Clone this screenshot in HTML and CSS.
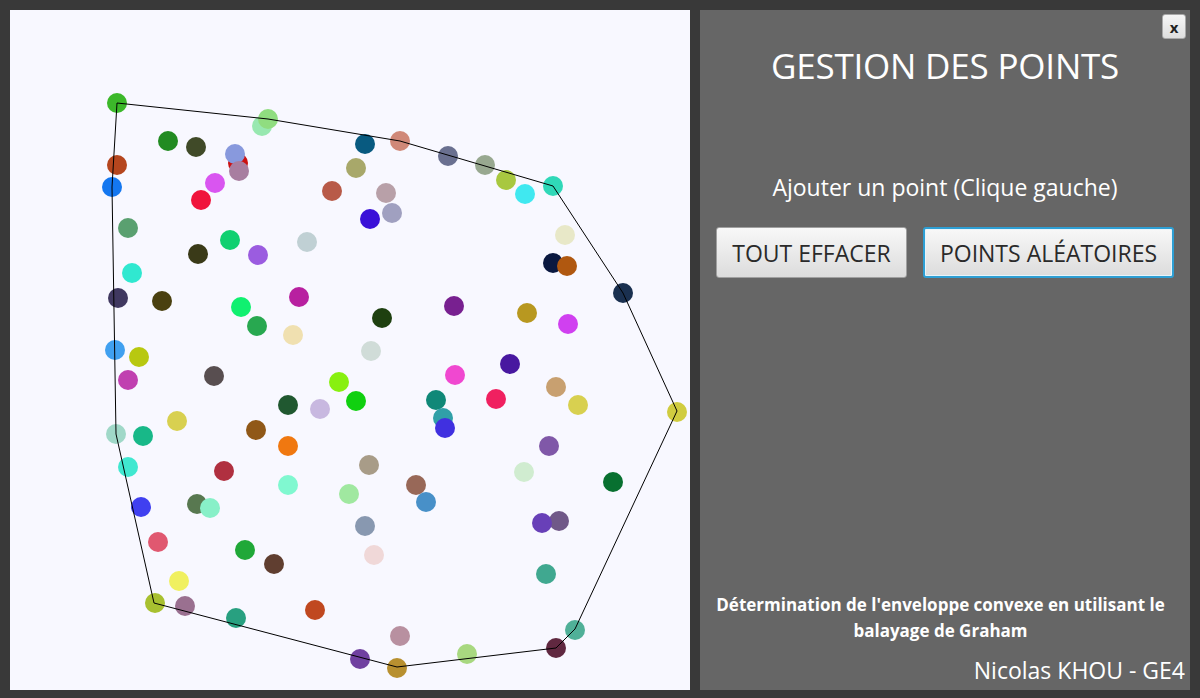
FILE: index.html
```html
<!DOCTYPE html>
<html lang="fr">
<head>
<meta charset="utf-8">
<title>Gestion des points</title>
<link rel="stylesheet" href="styles.css">
</head>
<body>
<div class="app">
  <div class="canvas">
    <svg class="board" width="680" height="680" viewBox="10 10 680 680">
      <g class="pts">
        <circle cx="117" cy="103" r="10" fill="#3cb82a"/>
        <circle cx="262" cy="126" r="10" fill="#98e8b0"/>
        <circle cx="268" cy="119" r="10" fill="#90dd80"/>
        <circle cx="168" cy="141" r="10" fill="#228b22"/>
        <circle cx="196" cy="147" r="10" fill="#404a28"/>
        <circle cx="238" cy="163" r="10" fill="#cc1111"/>
        <circle cx="235" cy="154" r="10" fill="#8899dd"/>
        <circle cx="239" cy="171" r="10" fill="#a87ea0"/>
        <circle cx="365" cy="144" r="10" fill="#085a80"/>
        <circle cx="400" cy="141" r="10" fill="#d08878"/>
        <circle cx="448" cy="156" r="10" fill="#6a7090"/>
        <circle cx="485" cy="165" r="10" fill="#98a890"/>
        <circle cx="506" cy="180" r="10" fill="#a8c840"/>
        <circle cx="553" cy="186" r="10" fill="#30d8b8"/>
        <circle cx="525" cy="194" r="10" fill="#40e8f0"/>
        <circle cx="117" cy="165" r="10" fill="#b5461e"/>
        <circle cx="112" cy="187" r="10" fill="#1477f0"/>
        <circle cx="215" cy="183" r="10" fill="#d955f0"/>
        <circle cx="201" cy="200" r="10" fill="#f0143c"/>
        <circle cx="332" cy="191" r="10" fill="#b85a48"/>
        <circle cx="356" cy="168" r="10" fill="#a8a86a"/>
        <circle cx="386" cy="193" r="10" fill="#b8a0a8"/>
        <circle cx="392" cy="213" r="10" fill="#a0a0c0"/>
        <circle cx="370" cy="219" r="10" fill="#3a10d8"/>
        <circle cx="128" cy="228" r="10" fill="#5aa070"/>
        <circle cx="230" cy="240" r="10" fill="#10d070"/>
        <circle cx="307" cy="242" r="10" fill="#c0d0d4"/>
        <circle cx="198" cy="254" r="10" fill="#3a3a18"/>
        <circle cx="258" cy="255" r="10" fill="#9b5ce0"/>
        <circle cx="565" cy="235" r="10" fill="#e8e8c8"/>
        <circle cx="553" cy="263" r="10" fill="#0a1840"/>
        <circle cx="567" cy="266" r="10" fill="#b05810"/>
        <circle cx="132" cy="273" r="10" fill="#30e8d0"/>
        <circle cx="118" cy="298" r="10" fill="#403860"/>
        <circle cx="162" cy="301" r="10" fill="#4a4010"/>
        <circle cx="241" cy="307" r="10" fill="#10f070"/>
        <circle cx="299" cy="297" r="10" fill="#b820a0"/>
        <circle cx="257" cy="326" r="10" fill="#28a850"/>
        <circle cx="293" cy="335" r="10" fill="#f0e0b0"/>
        <circle cx="382" cy="318" r="10" fill="#1e4010"/>
        <circle cx="454" cy="306" r="10" fill="#782090"/>
        <circle cx="527" cy="313" r="10" fill="#b89820"/>
        <circle cx="568" cy="324" r="10" fill="#d040f0"/>
        <circle cx="623" cy="293" r="10" fill="#1a3050"/>
        <circle cx="371" cy="351" r="10" fill="#d0dcd8"/>
        <circle cx="115" cy="350" r="10" fill="#40a0f0"/>
        <circle cx="139" cy="357" r="10" fill="#b8c810"/>
        <circle cx="128" cy="380" r="10" fill="#c040b0"/>
        <circle cx="214" cy="376" r="10" fill="#584e50"/>
        <circle cx="339" cy="382" r="10" fill="#88f010"/>
        <circle cx="356" cy="401" r="10" fill="#10d010"/>
        <circle cx="288" cy="405" r="10" fill="#205830"/>
        <circle cx="320" cy="409" r="10" fill="#c8b8e0"/>
        <circle cx="455" cy="375" r="10" fill="#f048d0"/>
        <circle cx="510" cy="364" r="10" fill="#4818a0"/>
        <circle cx="436" cy="400" r="10" fill="#108878"/>
        <circle cx="496" cy="399" r="10" fill="#f02060"/>
        <circle cx="556" cy="387" r="10" fill="#c8a070"/>
        <circle cx="578" cy="405" r="10" fill="#d8d050"/>
        <circle cx="677" cy="412" r="10" fill="#d0cc40"/>
        <circle cx="443" cy="418" r="10" fill="#30a0a8"/>
        <circle cx="445" cy="428" r="10" fill="#4030e0"/>
        <circle cx="177" cy="421" r="10" fill="#d8d050"/>
        <circle cx="116" cy="434" r="10" fill="#a0d8c8"/>
        <circle cx="143" cy="436" r="10" fill="#18b888"/>
        <circle cx="256" cy="430" r="10" fill="#905818"/>
        <circle cx="288" cy="446" r="10" fill="#f07810"/>
        <circle cx="549" cy="446" r="10" fill="#8058a8"/>
        <circle cx="128" cy="467" r="10" fill="#40e8d0"/>
        <circle cx="224" cy="471" r="10" fill="#b03040"/>
        <circle cx="369" cy="465" r="10" fill="#a89c88"/>
        <circle cx="524" cy="472" r="10" fill="#d0ecd0"/>
        <circle cx="613" cy="482" r="10" fill="#087030"/>
        <circle cx="288" cy="485" r="10" fill="#80f8d0"/>
        <circle cx="349" cy="494" r="10" fill="#a0e8a0"/>
        <circle cx="416" cy="485" r="10" fill="#986858"/>
        <circle cx="426" cy="502" r="10" fill="#4890c8"/>
        <circle cx="141" cy="507" r="10" fill="#4040f0"/>
        <circle cx="197" cy="504" r="10" fill="#587850"/>
        <circle cx="210" cy="508" r="10" fill="#88f0c8"/>
        <circle cx="365" cy="526" r="10" fill="#8898b0"/>
        <circle cx="559" cy="521" r="10" fill="#705888"/>
        <circle cx="542" cy="523" r="10" fill="#6840b8"/>
        <circle cx="158" cy="542" r="10" fill="#e05870"/>
        <circle cx="245" cy="550" r="10" fill="#20a838"/>
        <circle cx="274" cy="564" r="10" fill="#603e30"/>
        <circle cx="374" cy="555" r="10" fill="#f0d8d8"/>
        <circle cx="546" cy="574" r="10" fill="#40a890"/>
        <circle cx="179" cy="581" r="10" fill="#f0f060"/>
        <circle cx="155" cy="603" r="10" fill="#a8c030"/>
        <circle cx="185" cy="606" r="10" fill="#9a7090"/>
        <circle cx="236" cy="618" r="10" fill="#28a080"/>
        <circle cx="315" cy="610" r="10" fill="#c04820"/>
        <circle cx="400" cy="636" r="10" fill="#b890a0"/>
        <circle cx="575" cy="630" r="10" fill="#50b098"/>
        <circle cx="556" cy="648" r="10" fill="#602840"/>
        <circle cx="467" cy="654" r="10" fill="#a8d880"/>
        <circle cx="360" cy="659" r="10" fill="#7040a0"/>
        <circle cx="397" cy="668" r="10" fill="#b89030"/>
      </g>
      <polyline class="hull" points="117,103 268,119 400,141 553,186 623,293 677,411 575,629 556,648 397,667 154,603 116,434 112,187 117,103"/>
    </svg>
  </div>
  <div class="panel">
    <div class="topbar"><button class="close">x</button></div>
    <h1 class="title">GESTION DES POINTS</h1>
    <p class="hint">Ajouter un point (Clique gauche)</p>
    <div class="actions">
      <button class="btn btn-clear">TOUT EFFACER</button>
      <button class="btn btn-random">POINTS ALÉATOIRES</button>
    </div>
    <div class="spacer"></div>
    <p class="desc">Détermination de l'enveloppe convexe en utilisant le balayage de Graham</p>
    <p class="author">Nicolas KHOU - GE4</p>
  </div>
</div>
</body>
</html>
```
FILE: styles.css
```css
html, body {
  margin: 0;
  padding: 0;
  background: #393939;
}
body {
  width: 1200px;
  height: 698px;
  overflow: hidden;
  font-family: "Open Sans", "Noto Sans", sans-serif;
}
.app {
  display: flex;
  gap: 10px;
  padding: 10px;
  height: 698px;
  box-sizing: border-box;
}
.canvas {
  width: 680px;
  height: 680px;
  background: #f8f8ff;
  flex: none;
}
.board {
  display: block;
}
.hull {
  fill: none;
  stroke: #000;
  stroke-width: 1;
}
.panel {
  width: 490px;
  height: 680px;
  background: #666666;
  flex: none;
  display: flex;
  flex-direction: column;
  align-items: center;
  color: #fff;
}
.topbar {
  align-self: stretch;
  display: flex;
  justify-content: flex-end;
  padding: 4px 4px 0 0;
}
.close {
  width: 24px;
  height: 25px;
  padding: 0;
  border: 1px solid #a8a8a8;
  border-radius: 3px;
  background: linear-gradient(#f6f6f6, #dedede);
  font-family: "Open Sans", sans-serif;
  font-weight: 700;
  font-size: 15px;
  color: #222;
  line-height: 20px;
}
.title {
  margin: 4px 0 0 0;
  font-weight: 400;
  font-size: 35px;
  line-height: 46px;
  letter-spacing: -0.2px;
}
.hint {
  margin: 83px 0 0 0;
  font-size: 23px;
  line-height: 30px;
}
.actions {
  margin-top: 25px;
  display: flex;
  gap: 16px;
}
.btn {
  height: 51px;
  box-sizing: border-box;
  border: 1px solid #a0a0a0;
  border-radius: 3px;
  background: linear-gradient(#f8f8f8, #dcdcdc);
  font-family: "Open Sans", sans-serif;
  font-size: 23px;
  color: #2a2a2a;
  padding: 0;
}
.btn-clear {
  width: 191px;
}
.btn-random {
  width: 251px;
  border: 2px solid #2e9fd4;
  box-shadow: inset 0 0 0 1px #e8f4fa;
}
.spacer {
  flex: 1;
}
.desc {
  margin: 0 9px 0 0;
  width: 470px;
  text-align: center;
  font-weight: 700;
  font-size: 17px;
  line-height: 26px;
}
.author {
  align-self: flex-end;
  margin: 10px 5px 4px 0;
  font-size: 23px;
  line-height: 32px;
}
```
